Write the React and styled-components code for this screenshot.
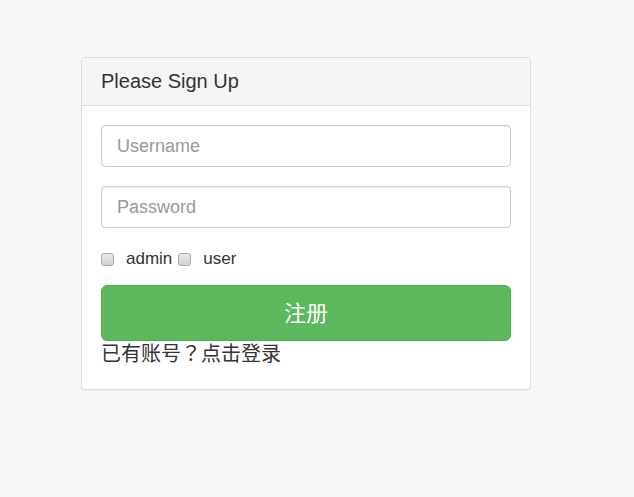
import React from "react";
import styled, { createGlobalStyle } from "styled-components";

const GlobalStyle = createGlobalStyle`
  html, body {
    margin: 0;
    padding: 0;
    background: #f8f8f8;
    font-family: "Liberation Sans", Arial, "Noto Sans CJK SC", sans-serif;
    color: #333;
  }
  * { box-sizing: border-box; }
`;

const Page = styled.div`
  padding: 57px 0 0 81px;
  min-height: 497px;
`;

const Panel = styled.div`
  width: 450px;
  background: #fff;
  border: 1px solid #ddd;
  border-radius: 4px;
  box-shadow: 0 1px 1px rgba(0, 0, 0, 0.05);
`;

const PanelHeading = styled.div`
  height: 48px;
  padding: 0 19px;
  display: flex;
  align-items: center;
  background: #f5f5f5;
  border-bottom: 1px solid #ddd;
  border-radius: 3px 3px 0 0;
`;

const Title = styled.h3`
  margin: 0;
  font-size: 20px;
  font-weight: normal;
  color: #333;
  line-height: 1;
  position: relative;
  top: -1px;
`;

const PanelBody = styled.form`
  padding: 19px 19px 20px;
  display: flex;
  flex-direction: column;
`;

const Input = styled.input`
  display: block;
  width: 100%;
  height: 42px;
  padding: 0 15px;
  border: 1px solid #ccc;
  border-radius: 4px;
  font-family: "Liberation Sans", Arial, sans-serif;
  font-size: 18px;
  color: #555;
  background: #fff;
  margin-bottom: ${(p) => p.$gap || 0}px;
  box-shadow: inset 0 1px 1px rgba(0, 0, 0, 0.075);
  outline: none;
  &::placeholder {
    color: #999;
  }
`;

const CheckRow = styled.div`
  display: flex;
  align-items: center;
  height: 22px;
  margin-top: 20px;
  margin-bottom: 15px;
  font-size: 17px;
`;

const CheckLabel = styled.label`
  display: flex;
  align-items: center;
  margin-right: ${(p) => p.$mr || 0}px;
  color: #333;
`;

const Box = styled.input.attrs({ type: "checkbox" })`
  appearance: none;
  -webkit-appearance: none;
  width: 13px;
  height: 13px;
  margin: 0 12px 0 0;
  border: 1px solid #a9a9a9;
  border-radius: 3px;
  background: linear-gradient(#e8e8e8, #d2d2d2);
`;

const SubmitButton = styled.button`
  width: 100%;
  height: 56px;
  padding: 0 0 5px;
  border: 1px solid #4cae4c;
  border-radius: 6px;
  background: #5cb85c;
  color: #fff;
  font-family: "Noto Sans CJK SC", sans-serif;
  font-size: 22px;
  cursor: pointer;
`;

const LoginLink = styled.a`
  display: block;
  font-family: "Noto Sans CJK SC", sans-serif;
  font-size: 20px;
  line-height: 28px;
  color: #333;
  text-decoration: none;
  position: relative;
  top: -2px;
`;

const Punct = styled.span`
  font-family: "Noto Sans CJK TC", "Noto Sans CJK SC", sans-serif;
`;

export default function App() {
  return (
    <>
      <GlobalStyle />
      <Page>
        <Panel>
          <PanelHeading>
            <Title>Please Sign Up</Title>
          </PanelHeading>
          <PanelBody onSubmit={(e) => e.preventDefault()}>
            <Input placeholder="Username" $gap={19} />
            <Input placeholder="Password" type="password" />
            <CheckRow>
              <CheckLabel $mr={6}>
                <Box />
                admin
              </CheckLabel>
              <CheckLabel>
                <Box />
                user
              </CheckLabel>
            </CheckRow>
            <SubmitButton type="submit">注册</SubmitButton>
            <LoginLink href="#">
              已有账号<Punct>？</Punct>点击登录
            </LoginLink>
          </PanelBody>
        </Panel>
      </Page>
    </>
  );
}
